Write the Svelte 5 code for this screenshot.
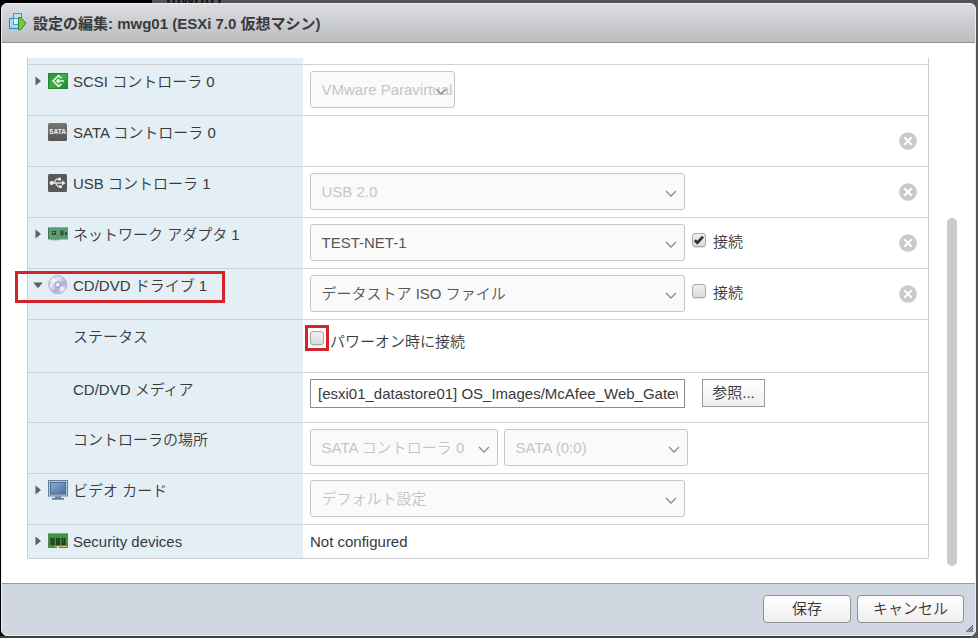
<script>
  const rows = [
    { h: 51, icon: 'scsi', arrow: 'right', label: 'SCSI コントローラ 0', kind: 'choices', selects: [{ w: 145, text: 'VMware Paravirtual', off: true }] },
    { h: 51, icon: 'sata', label: 'SATA コントローラ 0', kind: 'empty', remove: true },
    { h: 51, icon: 'usb', label: 'USB コントローラ 1', kind: 'choices', selects: [{ w: 375, text: 'USB 2.0', off: true }], remove: true },
    { h: 51, icon: 'net', arrow: 'right', label: 'ネットワーク アダプタ 1', kind: 'choices', selects: [{ w: 375, text: 'TEST-NET-1' }], check: 'on', remove: true },
    { h: 51, icon: 'cd', arrow: 'down', label: 'CD/DVD ドライブ 1', kind: 'choices', selects: [{ w: 375, text: 'データストア ISO ファイル' }], check: 'off', remove: true, marked: true },
    { h: 53, label: 'ステータス', kind: 'status' },
    { h: 50, label: 'CD/DVD メディア', kind: 'media' },
    { h: 51, label: 'コントローラの場所', kind: 'choices', selects: [{ w: 188, text: 'SATA コントローラ 0', off: true }, { w: 184, text: 'SATA (0:0)', off: true }] },
    { h: 51, icon: 'video', arrow: 'right', label: 'ビデオ カード', kind: 'choices', selects: [{ w: 375, text: 'デフォルト設定', off: true }] },
    { h: 34, icon: 'security', arrow: 'right', label: 'Security devices', kind: 'plain' }
  ];
</script>

{#snippet checkbox(on)}
  <span class="check" role="checkbox" aria-checked={on} tabindex="0">
    {#if on}
      <svg width="12" height="12" viewBox="0 0 12 12"><path d="M1.8 6.2 4.4 8.8 10 2.6" fill="none" stroke="#333" stroke-width="2.8" /></svg>
    {/if}
  </span>
{/snippet}

{#snippet icon(name)}
  {#if name === 'scsi'}
    <svg width="20" height="16" viewBox="0 0 20 16">
      <defs><linearGradient id="g1" x2="1" y2="1"><stop stop-color="#239338" /><stop offset=".5" stop-color="#43ad43" /><stop offset="1" stop-color="#178334" /></linearGradient></defs>
      <rect x=".5" y=".5" width="19" height="15" fill="url(#g1)" stroke="#28833a" />
      <path d="M13.5 5 10.6 2.6 5 8l5.6 5.4 2.9-2.4M16 8H9.3M11 6 9 8l2 2" fill="none" stroke="#e9faeb" stroke-width="1.5" />
    </svg>
  {:else if name === 'sata'}
    <svg width="19" height="18" viewBox="0 0 19 18">
      <defs><linearGradient id="g2" x2="0" y2="1"><stop stop-color="#777" /><stop offset="1" stop-color="#555" /></linearGradient></defs>
      <rect width="19" height="18" rx="1.5" fill="url(#g2)" />
      <text x="1" y="11.2" font-size="6.6" font-weight="bold" textLength="17" lengthAdjust="spacingAndGlyphs" fill="#f2f2f2">SATA</text>
    </svg>
  {:else if name === 'usb'}
    <svg width="19" height="18" viewBox="0 0 19 18">
      <rect width="19" height="18" rx="1.5" fill="#595959" />
      <path d="M3 9h12M5.5 9 8.5 5.2H11M7.5 9l2.6 3.6H12" fill="none" stroke="#ddd" stroke-width="1.3" />
      <circle cx="3.6" cy="9" r="2" fill="#eee" /><circle cx="11.5" cy="5.2" r="1.6" fill="#eee" />
      <path d="M14 6.6 17.5 9 14 11.4z" fill="#eee" /><path d="M11 11.3h2.8v2.6H11z" fill="#eee" />
    </svg>
  {:else if name === 'net'}
    <svg width="20" height="14" viewBox="0 0 20 14">
      <path d="M0 0h20v12.5H11v.8H3v-.8H0z" fill="#5d9b70" /><path d="M0 0h20v1H0z" fill="#83b78f" />
      <path d="M.5 1v11" stroke="#3c7c59" /><path d="M4 4h4v4H4zM12.5 3.5h3v5h-3zM17 5h2v3h-2z" fill="#2e5146" />
      <path d="M5 5h1.5v1H5z" fill="#8dab9b" /><path d="M4 12.5h6" stroke="#a3b67a" stroke-dasharray="1 1" />
    </svg>
  {:else if name === 'cd'}
    <svg width="20" height="20" viewBox="0 0 20 20">
      <defs><linearGradient id="g3" x2="1" y2="1"><stop stop-color="#b0b4cc" /><stop offset=".35" stop-color="#e9e7f4" /><stop offset=".6" stop-color="#b6b0da" /><stop offset="1" stop-color="#d5dcf4" /></linearGradient></defs>
      <circle cx="9.7" cy="9.7" r="9" fill="url(#g3)" stroke="#a9b0c4" />
      <path d="M9.7 9.7 2 5.8A9 9 0 0 1 6 2zM9.7 9.7 17.5 13a9 9 0 0 1-4 4z" fill="#fafaff" opacity=".75" />
      <circle cx="9.7" cy="9.7" r="3" fill="#c9c8e8" stroke="#9c99cc" /><circle cx="9.7" cy="9.7" r="1.4" fill="#f8f8fc" />
    </svg>
  {:else if name === 'video'}
    <svg width="20" height="20" viewBox="0 0 20 20">
      <defs><linearGradient id="g4" x2="1" y2="1"><stop stop-color="#8eb0d2" /><stop offset="1" stop-color="#426c9f" /></linearGradient></defs>
      <rect x=".5" y=".5" width="19" height="15.5" fill="#b7c7d8" stroke="#667f9d" />
      <rect x="2.5" y="2.5" width="15" height="11.5" fill="url(#g4)" stroke="#496a92" />
      <path d="M7 16.5h6V18h3v1.7H4V18h3z" fill="#637e9e" />
    </svg>
  {:else if name === 'security'}
    <svg width="20" height="16" viewBox="0 0 20 16">
      <path d="M0 0h20v15H11v-1H9v1H0z" fill="#42923a" /><path d="M0 .5h20" stroke="#79b871" />
      <path d="M2.5 5h4v7h-4zM8 5h4v7H8zM13.5 5h4v7h-4z" fill="#243a28" />
      <path d="M4.5 5v5M10 5v5M15.5 5v5" stroke="#405741" /><path d="M7 13.5h12" stroke="#d1c967" />
    </svg>
  {/if}
{/snippet}

<div class="page">
  <div class="behind">mwg01</div>
  <div class="dialog">
    <header>
      <svg width="20" height="20" viewBox="0 0 20 20">
        <path d="M5.5 1.5h8v11h-8z" fill="#b5e4fb" stroke="#3994c5" /><path d="M1.5 6.5h9v10h-9z" fill="#a2d9f5" stroke="#2785bb" />
        <path d="M5.5 6.5h5v6h-5z" fill="#e3f6fc" stroke="#4aa0cc" /><path d="M10.5 5.5h2.2l5.3 5.6-5.3 6.6h-2.2z" fill="#73cc42" stroke="#268529" />
      </svg>
      <h1>設定の編集: mwg01 (ESXi 7.0 仮想マシン)</h1>
    </header>
    <main>
      <div class="table">
        <div class="stub"><div></div></div>
        {#each rows as row}
          <div class="row" style:height="{row.h}px">
            <div class="label">
              <span class="arrow">
                {#if row.arrow === 'right'}<svg width="7" height="10" viewBox="0 0 7 10"><path d="M.5.5 6 5 .5 9.5z" fill="#5c5f61" /></svg>
                {:else if row.arrow === 'down'}<svg width="10" height="7" viewBox="0 0 10 7"><path d="M.3.5h9.4L5 6.2z" fill="#5c5f61" /></svg>{/if}
              </span>
              <span class="icon">{@render icon(row.icon)}</span>
              <span class="name">{row.label}</span>
              {#if row.marked}<i class="mark device"></i>{/if}
            </div>
            <div class="value {row.kind}">
              {#if row.kind === 'choices'}
                {#each row.selects as s}
                  <div class="select" class:off={s.off} style:width="{s.w}px">
                    <span>{s.text}</span>
                    <svg class="chevron" width="12" height="8" viewBox="0 0 12 8"><path d="m1 1 5 5 5-5" fill="none" stroke="#8b8b8b" stroke-width="1.3" /></svg>
                  </div>
                {/each}
                {#if row.check}<label class="connect">{@render checkbox(row.check === 'on')}<span class="caption">接続</span></label>{/if}
              {:else if row.kind === 'status'}
                <label class="power"><span class="boxed">{@render checkbox(false)}<i class="mark box"></i></span><span class="caption">パワーオン時に接続</span></label>
              {:else if row.kind === 'media'}
                <div class="field"><div>[esxi01_datastore01] OS_Images/McAfee_Web_Gateway</div></div>
                <button class="browse">参照...</button>
              {:else if row.kind === 'plain'}
                <span>Not configured</span>
              {/if}
              {#if row.remove}
                <svg class="remove" width="18" height="18" viewBox="0 0 18 18"><circle cx="9" cy="9" r="8.8" fill="#c9c9c9" /><path d="m5.3 5.3 7.4 7.4m0-7.4-7.4 7.4" stroke="#fff" stroke-width="2.1" /></svg>
              {/if}
            </div>
          </div>
        {/each}
      </div>
      <div class="scroll"></div>
    </main>
    <footer>
      <button class="save">保存</button>
      <button class="cancel">キャンセル</button>
      <svg class="grip" width="9" height="9" viewBox="0 0 9 9"><path d="M1 8 8 1v7z" fill="#92979d" /><path d="m1 8 7-7M4 8l4-4M7 8l1-1" stroke="#555d66" /></svg>
    </footer>
  </div>
</div>

<style>
  :global(body) { margin: 0; }
  * { box-sizing: border-box; }
  .page { height: 638px; width: 978px; overflow: hidden; padding: 3px 2px 2px 1px; position: relative; font: 350 15px/20px "Liberation Sans", "Noto Sans CJK JP", sans-serif; color: #3a3a3a; background: linear-gradient(90deg, #000 152px, #555 152px); }
  .behind { position: absolute; left: 166px; top: -10px; font-size: 17px; line-height: 20px; font-weight: bold; color: #151515; }
  .page::after { content: ''; position: absolute; left: 0; bottom: 0; width: 970px; height: 2px; background: #3e3e40; }
  .dialog { position: relative; width: 975px; height: 633px; display: flex; flex-direction: column; background: #fff; border: 1px solid #eee; border-radius: 6px; overflow: hidden; }
  header { height: 39px; flex: none; display: flex; align-items: center; padding: 0 0 2px 6px; background: linear-gradient(#dcdde0, #bcbdc0); border-bottom: 1px solid #929292; }
  h1 { margin: 3px 0 0 5px; font-size: 15px; line-height: 20px; white-space: nowrap; }
  main { height: 540px; flex: none; display: flex; align-items: flex-start; padding: 15px 0 0 25px; }
  .table { width: 902px; border: 1px solid #ccd0d3; border-top: 0; }
  .stub { height: 6px; }
  .stub div { width: 275px; height: 6px; background: #e3eff5; }
  .row { display: flex; border-top: 1px solid #ced2d4; }
  .label { width: 275px; flex: none; background: #e3eff5; display: flex; padding-top: 6px; position: relative; }
  .arrow { width: 20px; height: 20px; display: flex; align-items: center; justify-content: center; }
  .icon { width: 25px; height: 20px; display: flex; align-items: center; }
  .name { line-height: 20px; white-space: nowrap; padding-top: 1px; }
  .value { flex: 1; display: flex; align-items: flex-start; padding: 6px 0 0 7px; position: relative; }
  .select { height: 37px; border: 1px solid #c6c6c6; border-radius: 3px; background: #fafafa; padding: 8px 0 0 10.5px; margin-right: 6px; position: relative; color: #565656; white-space: nowrap; }
  .off { color: #c5c5c5; }
  .chevron { position: absolute; right: 7px; top: 16px; }
  .connect { display: flex; padding: 9px 0 0 1px; }
  .connect .caption { margin: -1px 0 0 7px; }
  .check { width: 14px; height: 14px; flex: none; display: flex; align-items: center; justify-content: center; border: 1px solid #aaa; border-radius: 3px; background: linear-gradient(#eee, #dcdcdc); box-shadow: 0 1px 1px #ddd; }
  .power { display: flex; }
  .boxed { position: relative; margin-top: 5px; }
  .power .caption { margin: 6px 0 0 6px; }
  .mark { position: absolute; border: 3px solid #d3232b; }
  .device { left: -13px; top: 2px; width: 210px; height: 32px; z-index: 1; }
  .box { left: -5px; top: -6px; width: 24px; height: 26px; }
  .field { width: 375px; height: 29px; border: 1px solid #8c8c8c; padding: 4px 6px 0 7px; }
  .field div { overflow: hidden; white-space: nowrap; }
  button { font: inherit; color: #333; background: linear-gradient(#fff, #eee); border: 1px solid #9a9a9a; padding: 0; }
  .browse { width: 63px; height: 28px; margin-left: 17px; }
  .value.plain { padding-top: 7px; }
  .remove { position: absolute; left: 595.5px; top: 15.5px; }
  .scroll { width: 10px; height: 348px; border-radius: 5px; background: #cacaca; margin: 160px 0 0 18px; }
  footer { flex: 1; border-top: 1px solid #979a99; background: #d0d7e0; display: flex; gap: 6px; justify-content: flex-end; padding: 11px 11px 0 0; position: relative; }
  footer button { height: 28px; border-radius: 4px; border-color: #929292; }
  .save { width: 88px; }
  .cancel { width: 107px; }
  .grip { position: absolute; right: 1px; bottom: 2px; }
</style>
